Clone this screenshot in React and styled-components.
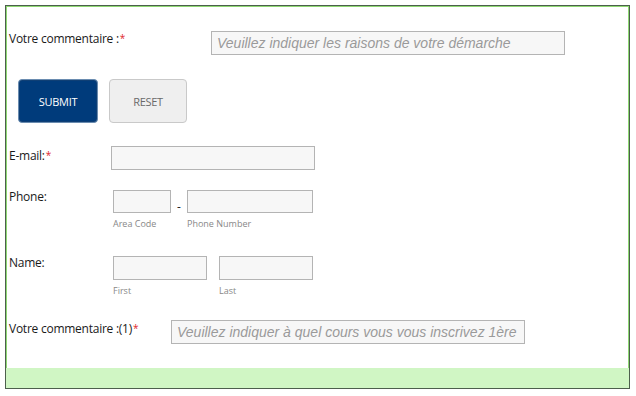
import React from "react";
import styled, { createGlobalStyle } from "styled-components";

const Global = createGlobalStyle`
  html, body { margin: 0; padding: 0; background: #ffffff; }
  body { font-family: "Open Sans", "Noto Sans", sans-serif; }
  * { box-sizing: border-box; }
`;

const Frame = styled.div`
  margin: 5px 0 0 5px;
  width: 625px;
  height: 384px;
  border: 1px solid #4d5f4d;
  display: flex;
  flex-direction: column;
`;

const Inner = styled.div`
  flex: 1;
  border: 1px solid #8fd873;
  border-bottom: none;
  display: flex;
  flex-direction: column;
  padding: 0 0 0 2px;
`;

const Footer = styled.div`
  height: 20px;
  background: #d0f6c4;
`;

const Row = styled.div`
  display: flex;
  align-items: flex-start;
  margin-top: ${(p) => p.$top}px;
`;

const Label = styled.div`
  width: ${(p) => p.$w}px;
  flex: none;
  font-size: 12px;
  line-height: 14px;
  color: #1a1a1a;
  padding-top: ${(p) => p.$pt || 0}px;
  letter-spacing: -0.25px;
`;

const Req = styled.span`
  color: #e0262b;
  font-size: 10px;
  vertical-align: 1px;
  margin-left: 1px;
`;

const TextInput = styled.input`
  width: ${(p) => p.$w}px;
  height: ${(p) => p.$h || 24}px;
  border: 1px solid #b4b4b4;
  background: #f7f7f7;
  padding: 0 5px;
  margin: 0;
  font-family: "Liberation Sans", Arial, sans-serif;
  font-style: italic;
  font-size: 14px;
  color: #444;
  outline: none;
  &::placeholder { color: #9a9a9a; }
`;

const Field = styled.div`
  display: flex;
  flex-direction: column;
  margin-left: ${(p) => p.$ml || 0}px;
`;

const SubLabel = styled.div`
  font-size: 9px;
  line-height: 12px;
  color: #888888;
  margin-top: 5px;
`;

const Dash = styled.div`
  width: 16px;
  text-align: center;
  font-size: 12px;
  line-height: 12px;
  padding-top: 11px;
  color: #222;
`;

const Buttons = styled.div`
  display: flex;
  gap: 11px;
  margin: 24px 0 0 9px;
`;

const Button = styled.button`
  width: ${(p) => p.$w}px;
  height: 44px;
  border-radius: 4px;
  font-family: "Open Sans", "Noto Sans", sans-serif;
  font-size: 11px;
  letter-spacing: -0.3px;
  cursor: pointer;
  border: 1px solid ${(p) => (p.$primary ? "#6a8cb0" : "#c9c9c9")};
  background: ${(p) => (p.$primary ? "#003b7b" : "#efefef")};
  color: ${(p) => (p.$primary ? "#ffffff" : "#6a6a6a")};
  box-shadow: ${(p) => (p.$primary ? "inset 0 0 0 1px #0f3f75" : "none")};
`;

export default function App() {
  return (
    <>
      <Global />
      <Frame>
        <Inner>
          <Row $top={24}>
            <Label $w={202} $pt={0}>
              Votre commentaire :<Req>*</Req>
            </Label>
            <TextInput $w={354} placeholder="Veuillez indiquer les raisons de votre démarche" />
          </Row>

          <Buttons>
            <Button $primary $w={80}>SUBMIT</Button>
            <Button $w={78}>RESET</Button>
          </Buttons>

          <Row $top={23}>
            <Label $w={102} $pt={2}>
              E-mail:<Req>*</Req>
            </Label>
            <TextInput $w={204} />
          </Row>

          <Row $top={20}>
            <Label $w={104} $pt={0}>Phone:</Label>
            <Field>
              <TextInput $w={58} $h={23} />
              <SubLabel>Area Code</SubLabel>
            </Field>
            <Dash>-</Dash>
            <Field>
              <TextInput $w={126} $h={23} />
              <SubLabel>Phone Number</SubLabel>
            </Field>
          </Row>

          <Row $top={26}>
            <Label $w={104} $pt={0}>Name:</Label>
            <Field>
              <TextInput $w={94} />
              <SubLabel>First</SubLabel>
            </Field>
            <Field $ml={12}>
              <TextInput $w={94} />
              <SubLabel>Last</SubLabel>
            </Field>
          </Row>

          <Row $top={23}>
            <Label $w={162} $pt={1}>
              Votre commentaire :(1)<Req>*</Req>
            </Label>
            <TextInput $w={354} placeholder="Veuillez indiquer à quel cours vous vous inscrivez 1ère ou 2ème année" />
          </Row>
        </Inner>
        <Footer />
      </Frame>
    </>
  );
}
